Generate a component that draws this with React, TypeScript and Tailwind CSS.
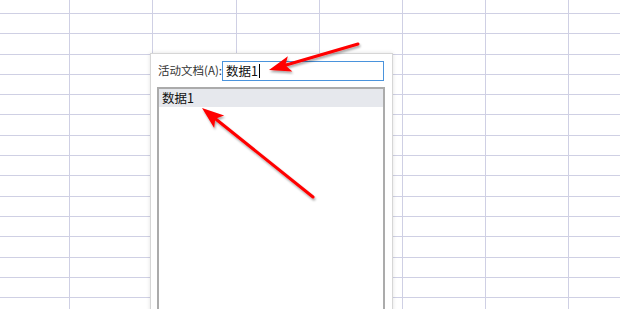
import React from 'react';

const cols = [70, 83, 84, 83, 83, 83, 83, 83];
const rowCount = 16;

function Arrow({ x1, y1, x2, y2 }: { x1: number; y1: number; x2: number; y2: number }) {
  // tail (x1,y1) -> tip (x2,y2)
  const dx = x2 - x1;
  const dy = y2 - y1;
  const len = Math.hypot(dx, dy);
  const ux = dx / len;
  const uy = dy / len;
  const headLen = 22;
  const headW = 8;
  const bx = x2 - ux * headLen;
  const by = y2 - uy * headLen;
  const nx = -uy;
  const ny = ux;
  const pts = `${x2},${y2} ${bx + nx * headW},${by + ny * headW} ${bx + ux * 5},${by + uy * 5} ${bx - nx * headW},${by - ny * headW}`;
  return (
    <g>
      <line x1={x1} y1={y1} x2={bx + ux * 6} y2={by + uy * 6} stroke="#ff0000" strokeWidth={3} strokeLinecap="round" />
      <polygon points={pts} fill="#ff0000" />
    </g>
  );
}

export default function App() {
  return (
    <div className="relative w-[620px] h-[309px] overflow-hidden bg-white" style={{ fontFamily: '"Noto Sans CJK SC", "Noto Sans", sans-serif' }}>
      {/* spreadsheet grid */}
      <div className="flex flex-col">
        <div className="flex h-[14px] border-b border-[#cfd0e4]">
          {cols.map((w, i) => (
            <div key={i} className="h-full border-r border-[#cfd0e4] shrink-0" style={{ width: w }} />
          ))}
        </div>
        {Array.from({ length: rowCount }).map((_, r) => (
          <div key={r} className="flex h-[20.3px] border-b border-[#cfd0e4]">
            {cols.map((w, i) => (
              <div key={i} className="h-full border-r border-[#cfd0e4] shrink-0" style={{ width: w }} />
            ))}
          </div>
        ))}
      </div>

      {/* dialog */}
      <div className="absolute left-[150px] top-[53px] w-[243px] h-[270px] bg-white border border-[#d6d6d6] shadow-[0_0_4px_rgba(0,0,0,0.12)] px-[6px] pt-[7px]">
        <div className="flex items-center h-[20px]">
          <span className="text-[11.5px] text-[#333] leading-none w-[65px] pl-[1px] whitespace-nowrap">活动文档(A):</span>
          <div className="flex items-center w-[162px] h-[20px] border border-[#4a93dc] bg-white pl-[3px]">
            <span className="text-[12.5px] text-[#111] leading-none">数据1</span>
            <span className="w-px h-[14px] bg-black ml-[1px]" />
          </div>
        </div>
        <div className="mt-[6px] w-[228px] h-[240px] border-2 border-[#ababab] bg-white">
          <div className="h-[18px] bg-[#e6e8ed] flex items-center pl-[3px]">
            <span className="text-[12.5px] text-[#111] leading-none">数据1</span>
          </div>
        </div>
      </div>

      {/* annotation arrows */}
      <svg className="absolute inset-0 pointer-events-none" width={620} height={309}>
        <defs>
          <filter id="sh" x="-20%" y="-20%" width="140%" height="140%">
            <feDropShadow dx="1" dy="2" stdDeviation="1.2" floodColor="#000" floodOpacity="0.35" />
          </filter>
        </defs>
        <g filter="url(#sh)">
          <Arrow x1={358} y1={44} x2={269} y2={70} />
          <Arrow x1={313} y1={197} x2={202} y2={108} />
        </g>
      </svg>
    </div>
  );
}
